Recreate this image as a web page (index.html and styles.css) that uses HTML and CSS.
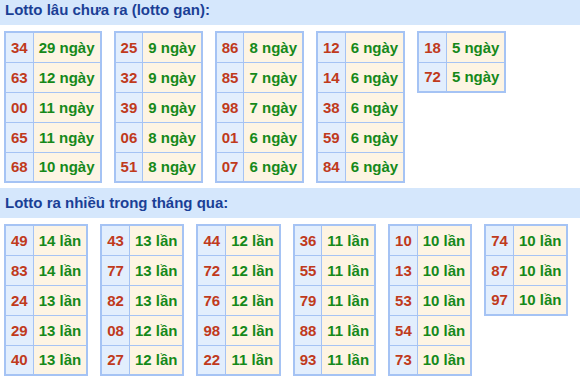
FILE: index.html
```html
<!DOCTYPE html>
<html>
<head>
<meta charset="utf-8">
<link rel="stylesheet" href="styles.css">
</head>
<body>
<div class="page">
  <div class="title">Lotto lâu chưa ra (lotto gan):</div>
  <div class="tables">
    <table class="lt"><tr><td class="n">34</td><td class="v">29 ngày</td></tr><tr><td class="n">63</td><td class="v">12 ngày</td></tr><tr><td class="n">00</td><td class="v">11 ngày</td></tr><tr><td class="n">65</td><td class="v">11 ngày</td></tr><tr><td class="n">68</td><td class="v">10 ngày</td></tr></table>
    <table class="lt"><tr><td class="n">25</td><td class="v">9 ngày</td></tr><tr><td class="n">32</td><td class="v">9 ngày</td></tr><tr><td class="n">39</td><td class="v">9 ngày</td></tr><tr><td class="n">06</td><td class="v">8 ngày</td></tr><tr><td class="n">51</td><td class="v">8 ngày</td></tr></table>
    <table class="lt"><tr><td class="n">86</td><td class="v">8 ngày</td></tr><tr><td class="n">85</td><td class="v">7 ngày</td></tr><tr><td class="n">98</td><td class="v">7 ngày</td></tr><tr><td class="n">01</td><td class="v">6 ngày</td></tr><tr><td class="n">07</td><td class="v">6 ngày</td></tr></table>
    <table class="lt"><tr><td class="n">12</td><td class="v">6 ngày</td></tr><tr><td class="n">14</td><td class="v">6 ngày</td></tr><tr><td class="n">38</td><td class="v">6 ngày</td></tr><tr><td class="n">59</td><td class="v">6 ngày</td></tr><tr><td class="n">84</td><td class="v">6 ngày</td></tr></table>
    <table class="lt"><tr><td class="n">18</td><td class="v">5 ngày</td></tr><tr><td class="n">72</td><td class="v">5 ngày</td></tr></table>
  </div>
  <div class="title">Lotto ra nhiều trong tháng qua:</div>
  <div class="tables">
    <table class="lt"><tr><td class="n">49</td><td class="v">14 lần</td></tr><tr><td class="n">83</td><td class="v">14 lần</td></tr><tr><td class="n">24</td><td class="v">13 lần</td></tr><tr><td class="n">29</td><td class="v">13 lần</td></tr><tr><td class="n">40</td><td class="v">13 lần</td></tr></table>
    <table class="lt"><tr><td class="n">43</td><td class="v">13 lần</td></tr><tr><td class="n">77</td><td class="v">13 lần</td></tr><tr><td class="n">82</td><td class="v">13 lần</td></tr><tr><td class="n">08</td><td class="v">12 lần</td></tr><tr><td class="n">27</td><td class="v">12 lần</td></tr></table>
    <table class="lt"><tr><td class="n">44</td><td class="v">12 lần</td></tr><tr><td class="n">72</td><td class="v">12 lần</td></tr><tr><td class="n">76</td><td class="v">12 lần</td></tr><tr><td class="n">98</td><td class="v">12 lần</td></tr><tr><td class="n">22</td><td class="v">11 lần</td></tr></table>
    <table class="lt"><tr><td class="n">36</td><td class="v">11 lần</td></tr><tr><td class="n">55</td><td class="v">11 lần</td></tr><tr><td class="n">79</td><td class="v">11 lần</td></tr><tr><td class="n">88</td><td class="v">11 lần</td></tr><tr><td class="n">93</td><td class="v">11 lần</td></tr></table>
    <table class="lt"><tr><td class="n">10</td><td class="v">10 lần</td></tr><tr><td class="n">13</td><td class="v">10 lần</td></tr><tr><td class="n">53</td><td class="v">10 lần</td></tr><tr><td class="n">54</td><td class="v">10 lần</td></tr><tr><td class="n">73</td><td class="v">10 lần</td></tr></table>
    <table class="lt"><tr><td class="n">74</td><td class="v">10 lần</td></tr><tr><td class="n">87</td><td class="v">10 lần</td></tr><tr><td class="n">97</td><td class="v">10 lần</td></tr></table>
  </div>
</div>
</body>
</html>
```

FILE: styles.css
```css
html, body {
  margin: 0;
  padding: 0;
  background: #ffffff;
}
.page {
  margin-top: -5px;
  font-family: "Liberation Sans", Arial, sans-serif;
  font-weight: bold;
  font-size: 15px;
}
.title {
  background: #d5e7fc;
  color: #1b3f96;
  height: 30px;
  line-height: 30px;
  padding-left: 5px;
}
.tables {
  display: flex;
  align-items: flex-start;
  gap: 12px;
  padding: 6px 4px 5px;
}
.lt {
  border-collapse: collapse;
  border: 2px solid #a5c3f4;
}
.lt td {
  border: 1px solid #a5c3f4;
  height: 30px;
  padding: 0 5px;
  text-align: center;
  white-space: nowrap;
  box-sizing: border-box;
}
.lt td.n {
  background: #e2eefd;
  color: #c03a1c;
}
.lt td.v {
  background: #fdf4e3;
  color: #15891a;
}
```
